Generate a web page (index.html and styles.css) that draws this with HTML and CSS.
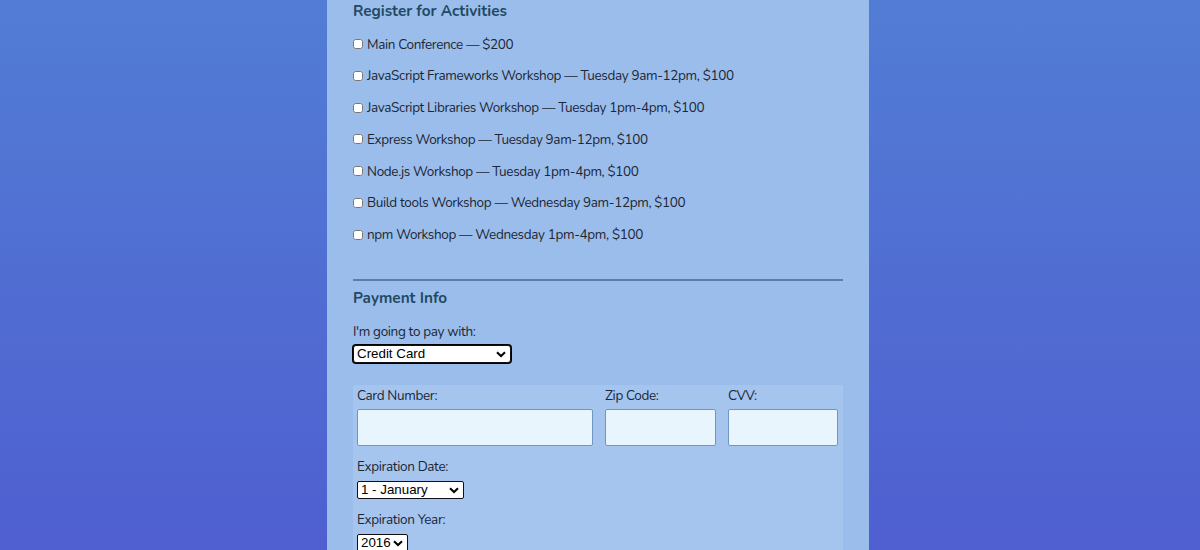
FILE: index.html
```html
<!DOCTYPE html>
<html lang="en">
<head>
<meta charset="utf-8">
<title>Register</title>
<link rel="stylesheet" href="styles.css">
</head>
<body>
<div class="container">
  <section class="activities">
    <h2 class="legend">Register for Activities</h2>
    <label class="act"><input type="checkbox">Main Conference — $200</label>
    <label class="act"><input type="checkbox">JavaScript Frameworks Workshop — Tuesday 9am-12pm, $100</label>
    <label class="act"><input type="checkbox">JavaScript Libraries Workshop — Tuesday 1pm-4pm, $100</label>
    <label class="act"><input type="checkbox">Express Workshop — Tuesday 9am-12pm, $100</label>
    <label class="act"><input type="checkbox">Node.js Workshop — Tuesday 1pm-4pm, $100</label>
    <label class="act"><input type="checkbox">Build tools Workshop — Wednesday 9am-12pm, $100</label>
    <label class="act"><input type="checkbox">npm Workshop — Wednesday 1pm-4pm, $100</label>
  </section>
  <hr class="divider">
  <section class="payment">
    <h2 class="legend">Payment Info</h2>
    <label class="lbl" for="payment">I'm going to pay with:</label>
    <div class="selwrap sw-pay">
      <select id="payment" class="sel sel-pay">
        <option>Credit Card</option>
        <option>PayPal</option>
        <option>Bitcoin</option>
      </select>
      <svg class="chev" viewBox="0 0 10 7" width="10" height="7"><path d="M1 1.2 L5 5 L9 1.2" fill="none" stroke="#000" stroke-width="2"/></svg>
    </div>
    <div class="card">
      <div class="card-row">
        <div class="field field-num">
          <label class="lbl">Card Number:</label>
          <input class="txt" type="text">
        </div>
        <div class="field field-zip">
          <label class="lbl">Zip Code:</label>
          <input class="txt" type="text">
        </div>
        <div class="field field-cvv">
          <label class="lbl">CVV:</label>
          <input class="txt" type="text">
        </div>
      </div>
      <label class="lbl lbl-gap">Expiration Date:</label>
      <div class="selwrap sw-month">
        <select class="sel">
          <option>1 - January</option>
        </select>
        <svg class="chev" viewBox="0 0 10 7" width="10" height="7"><path d="M1 1.2 L5 5 L9 1.2" fill="none" stroke="#000" stroke-width="2"/></svg>
      </div>
      <label class="lbl lbl-gap">Expiration Year:</label>
      <div class="selwrap sw-year">
        <select class="sel">
          <option>2016</option>
        </select>
        <svg class="chev" viewBox="0 0 10 7" width="10" height="7"><path d="M1 1.2 L5 5 L9 1.2" fill="none" stroke="#000" stroke-width="2"/></svg>
      </div>
    </div>
  </section>
</div>
</body>
</html>
```
FILE: styles.css
```css
html, body {
  margin: 0;
  height: 100%;
}
body {
  background: linear-gradient(180deg, #527dd5 0%, #4f5fd0 100%);
  font-family: "Nunito", "Lato", "Open Sans", sans-serif;
  color: #1b2734;
  overflow: hidden;
}
.container {
  width: 490px;
  margin: 0 auto;
  padding: 0 26px 0 26px;
  background: #9bbdec;
  height: 100%;
  overflow: hidden;
  transform: translateX(-2px);
}
.legend {
  margin: 0;
  font-size: 15.3px;
  line-height: 22px;
  font-weight: 700;
  color: #1f4a63;
}
.activities .legend {
  margin-bottom: 12px;
}
.act {
  display: flex;
  align-items: center;
  height: 20px;
  margin-bottom: 11.8px;
  font-size: 13.5px;
  letter-spacing: -0.35px;
  white-space: pre;
}
.act input {
  margin: 0 4px 0 0;
  width: 10px;
  height: 10px;
}
.divider {
  margin: 34px 0 0 0;
  border: 0;
  height: 2px;
  background: #5b7fab;
}
.payment {
  padding-top: 6px;
}
.payment .legend {
  margin-bottom: 14px;
}
.lbl {
  display: block;
  font-size: 13.5px;
  letter-spacing: -0.35px;
  line-height: 18px;
}
.selwrap {
  position: relative;
  display: block;
}
.sel {
  display: block;
  box-sizing: border-box;
  width: 100%;
  -webkit-appearance: none;
  appearance: none;
  font-family: "Liberation Sans", Arial, sans-serif;
  font-size: 13.33px;
  line-height: 15px;
  height: 18px;
  padding: 0 0 0 3px;
  border: 1px solid #111;
  border-radius: 2px;
  background: #fff;
  color: #000;
  margin: 0;
  outline: none;
}
.chev {
  position: absolute;
  top: 6px;
  right: 5px;
  pointer-events: none;
}
.sw-pay {
  width: 158px;
  margin-top: 4px;
}
.sel-pay {
  box-shadow: 0 0 0 1px #000;
  border-radius: 3px;
}
.card {
  margin-top: 22px;
  background: #a5c5ef;
  padding: 2px 4px 0 4px;
  height: 200px;
}
.card-row {
  display: flex;
  gap: 12px;
}
.field-num { width: 236px; }
.field-zip { width: 111px; }
.field-cvv { width: 110px; }
.field .lbl {
  margin-bottom: 4px;
}
.txt {
  display: block;
  box-sizing: border-box;
  width: 100%;
  height: 37px;
  margin: 0;
  border: 1px solid #7196c6;
  border-radius: 2px;
  background: #e8f5fc;
}
.lbl-gap {
  margin-top: 12px;
  margin-bottom: 5px;
}
.sw-month { width: 107px; }
.sw-year { width: 51px; }
```
